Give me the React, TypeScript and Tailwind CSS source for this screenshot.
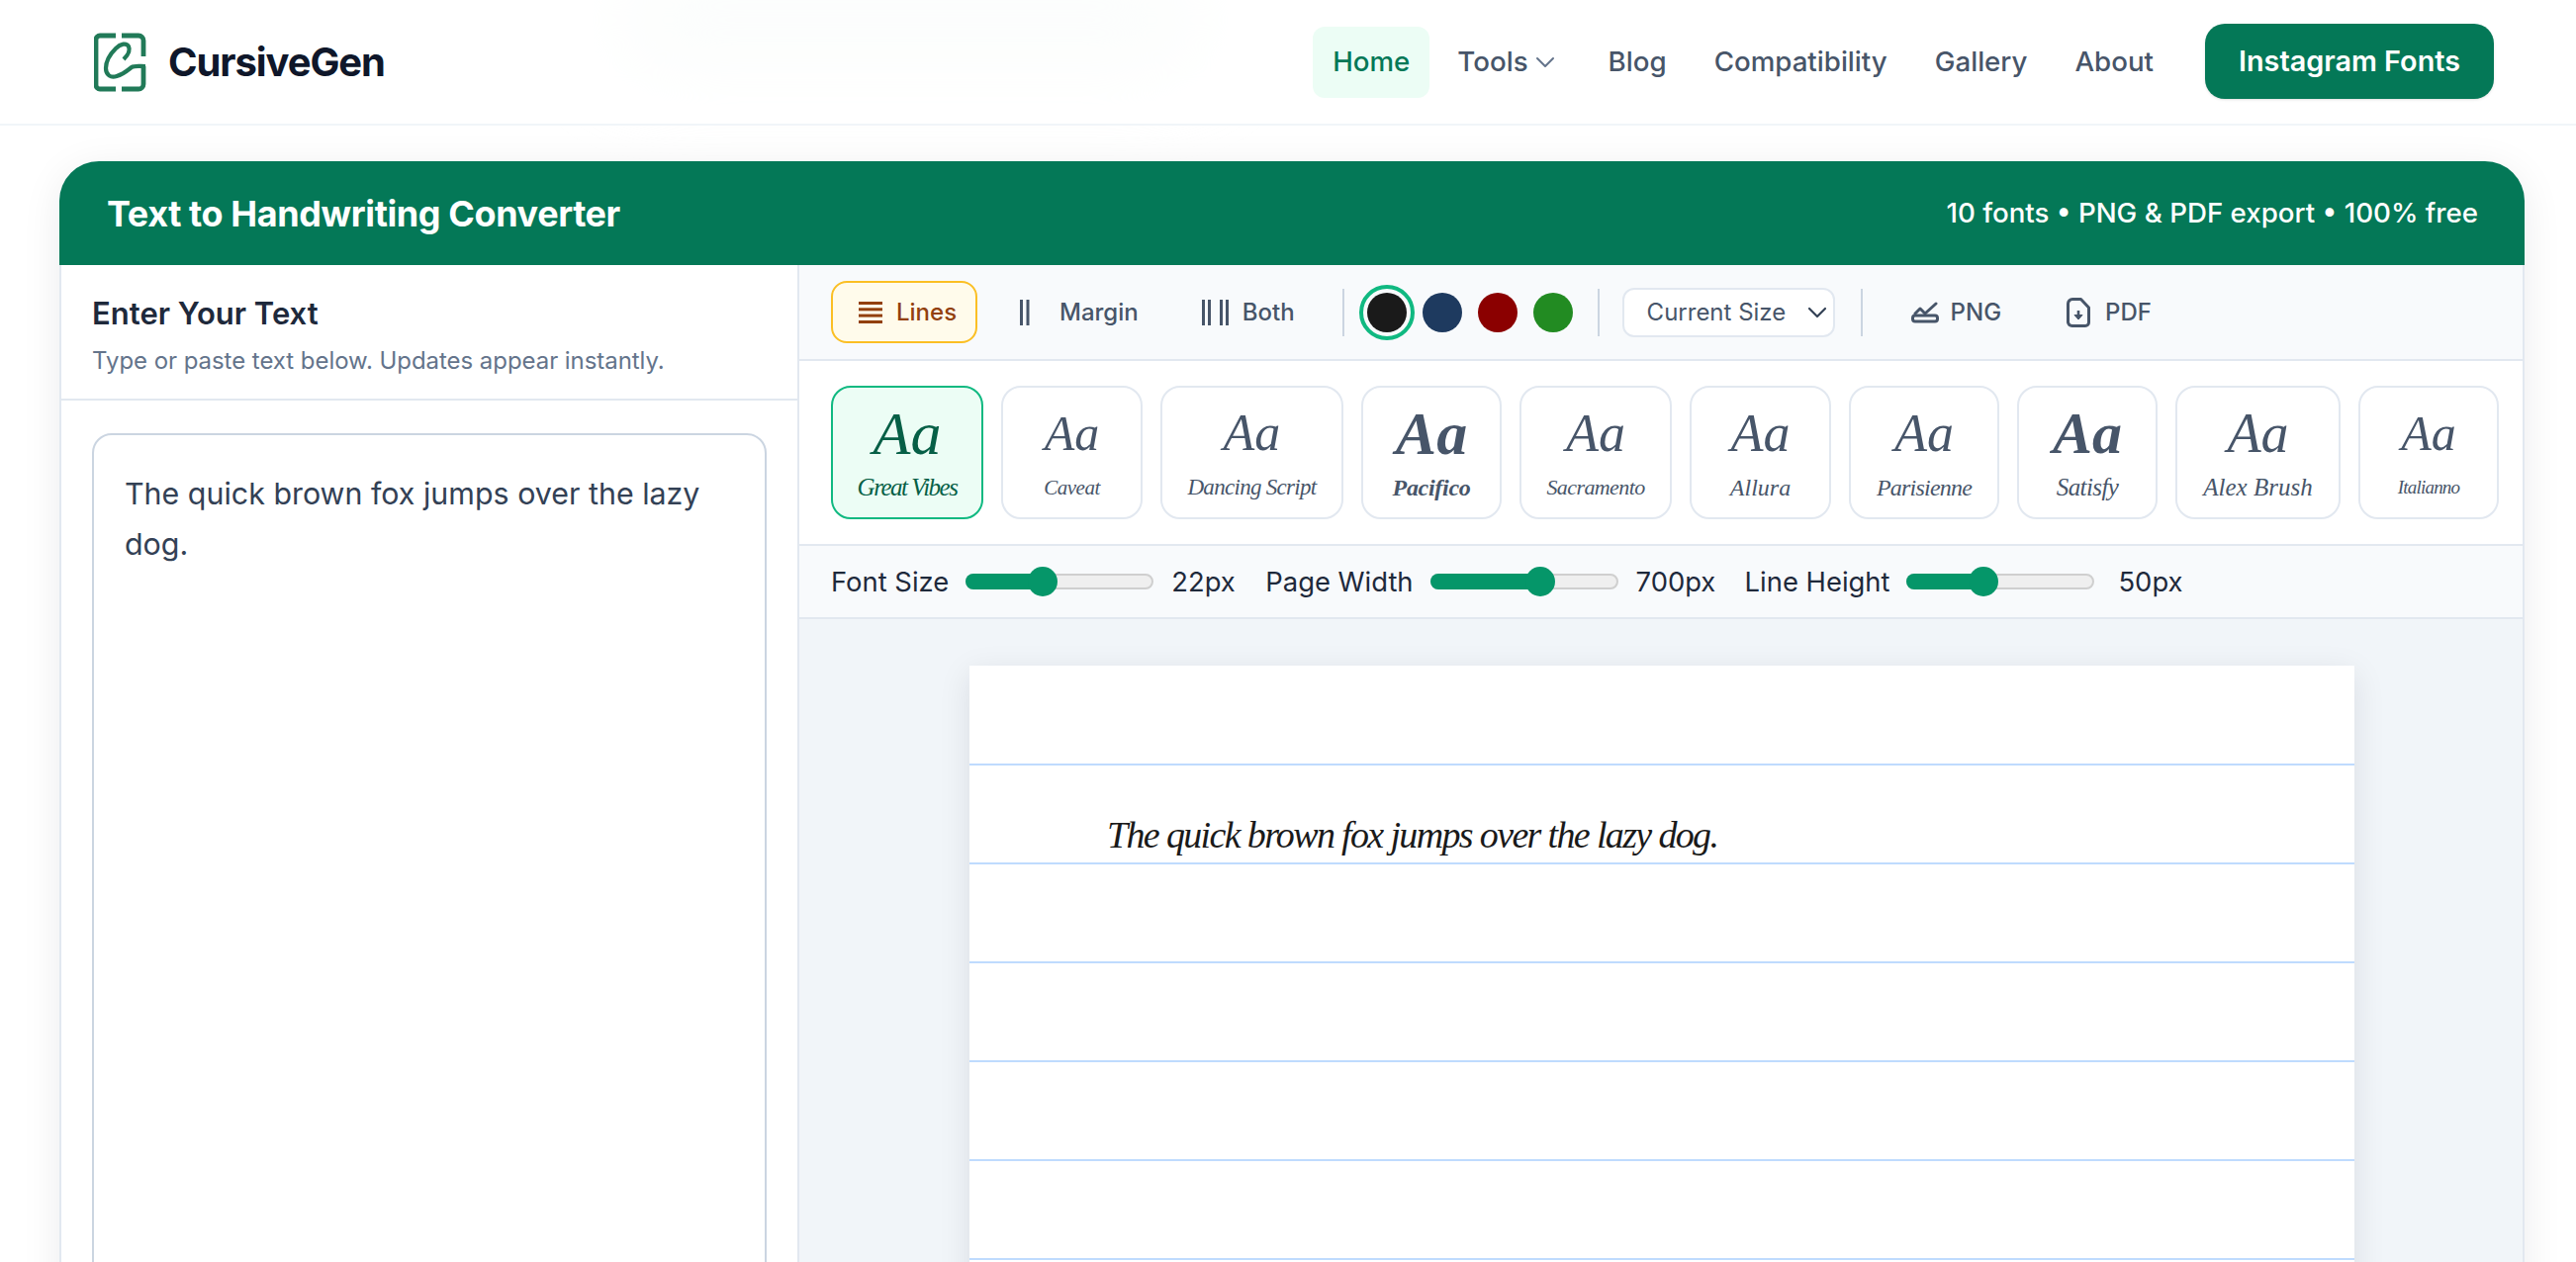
import React from 'react';
import { ChevronDown } from 'lucide-react';

const navItems = ['Blog', 'Compatibility', 'Gallery', 'About'];

const fontCards = [
  { name: 'Great Vibes', width: 'w-[154px]', active: true, aa: 'text-[62px] font-normal', label: 'text-[25px] font-normal tracking-[-1.5px]' },
  { name: 'Caveat', width: 'w-[143px]', aa: 'text-[50px] font-normal', label: 'text-[21px] font-normal tracking-[-0.5px]' },
  { name: 'Dancing Script', width: 'w-[185px]', aa: 'text-[52px] font-normal', label: 'text-[23px] font-normal tracking-[-0.7px]' },
  { name: 'Pacifico', width: 'w-[142px]', aa: 'text-[62px] font-bold', label: 'text-[24px] font-bold tracking-[-0.3px]' },
  { name: 'Sacramento', width: 'w-[154px]', aa: 'text-[54px] font-normal', label: 'text-[22px] font-normal tracking-[-0.6px]' },
  { name: 'Allura', width: 'w-[143px]', aa: 'text-[54px] font-normal', label: 'text-[24px] font-normal' },
  { name: 'Parisienne', width: 'w-[152px]', aa: 'text-[54px] font-normal', label: 'text-[24px] font-normal tracking-[-0.8px]' },
  { name: 'Satisfy', width: 'w-[142px]', aa: 'text-[60px] font-bold', label: 'text-[25px] font-normal tracking-[-0.6px]' },
  { name: 'Alex Brush', width: 'w-[167px]', aa: 'text-[56px] font-normal', label: 'text-[25px] font-normal' },
  { name: 'Italianno', width: 'w-[142px]', aa: 'text-[50px] font-normal', label: 'text-[19px] font-normal tracking-[-0.8px]' },
];

const swatches = ['bg-[#1a1a1a]', 'bg-[#1e3a5f]', 'bg-[#8b0000]', 'bg-[#228b22]'];

function Logo() {
  return (
    <svg width="53" height="60" viewBox="0 0 53 60" fill="none" stroke="#217a58" strokeWidth="4.8" strokeLinejoin="round" strokeLinecap="butt">
      <path d="M22 3H6a4 4 0 0 0-4 4v46a4 4 0 0 0 4 4h16" />
      <path d="M28 3h17a5 5 0 0 1 5 5v16" />
      <path d="M28 57h17a5 5 0 0 0 5-5V34" />
      <path d="M30 27c4-4 7-9 5-13-2-4-8-3-13 2-6 6-10 13-10 20 0 7 5 10 11 8 7-2 11-6 15-9 3-2 8-1 14-1" strokeWidth="4.2" />
    </svg>
  );
}

function LinesIcon() {
  return (
    <svg width="24" height="22" viewBox="0 0 24 22" fill="#92400e">
      <rect y="0" width="24" height="3" />
      <rect y="6.3" width="24" height="3" />
      <rect y="12.6" width="24" height="3" />
      <rect y="19" width="24" height="3" />
    </svg>
  );
}

function MarginIcon() {
  return (
    <svg width="26" height="26" viewBox="0 0 26 26" fill="#475569">
      <rect x="0" width="3" height="26" />
      <rect x="6.5" width="3" height="26" />
    </svg>
  );
}

function BothIcon() {
  return (
    <svg width="27" height="26" viewBox="0 0 27 26" fill="#475569">
      <rect x="0" width="3" height="26" />
      <rect x="6" width="3" height="26" />
      <rect x="18" width="3" height="26" />
      <rect x="24" width="3" height="26" />
    </svg>
  );
}

function PngIcon() {
  return (
    <svg width="28" height="22" viewBox="0 0 28 22" fill="none" stroke="#475569" strokeWidth="3" strokeLinecap="round" strokeLinejoin="round">
      <path d="M4 12l5-5 5 5 11-10" />
      <rect x="1.5" y="14" width="25" height="6" rx="2.5" />
    </svg>
  );
}

function PdfIcon() {
  return (
    <svg width="24" height="30" viewBox="0 0 24 30" fill="none" stroke="#475569" strokeWidth="3" strokeLinejoin="round" className="shrink-0">
      <path d="M6 1.5h8.5L22.5 10v15a3.5 3.5 0 0 1-3.5 3.5H6A4.5 4.5 0 0 1 1.5 25V6A4.5 4.5 0 0 1 6 1.5z" />
      <path d="M12 13v5" strokeWidth="2.6" />
      <path d="M8 17.5h8L12 22z" fill="#475569" strokeWidth="1" />
    </svg>
  );
}

function Slider({ label, fill, thumb }: { label: string; fill: string; thumb: string }) {
  return (
    <div className="flex items-center">
      <span>{label}</span>
      <div className="relative ml-[17px] h-[16px] w-[190px] rounded-full border-2 border-[#cfcfcf] bg-[#efefef]">
        <div className={'absolute -left-[2px] -top-[2px] h-[16px] rounded-l-full bg-[#059669] ' + fill} />
        <div className={'absolute -top-[9px] h-[30px] w-[30px] rounded-full bg-[#059669] ' + thumb} />
      </div>
    </div>
  );
}

export default function App() {
  return (
    <div className="relative h-[1276px] overflow-hidden bg-white font-['Inter',sans-serif] text-[#1e293b]">
      <div className="absolute left-[620px] -top-[30px] h-[100px] w-[600px] rounded-full bg-[#f3f8f5] blur-2xl" />

      <header className="relative flex h-[127px] items-center justify-between border-b-2 border-[#f1f5f9] bg-white/70 pl-[95px] pr-[83px]">
        <div className="flex items-center gap-[22px]">
          <Logo />
          <span className="text-[40px] font-bold tracking-[-1.1px] text-[#0f172a]">CursiveGen</span>
        </div>
        <nav className="flex items-center gap-[8px] text-[27.7px] font-medium text-[#475569]">
          <a className="flex h-[72px] items-center rounded-[12px] bg-[#ecfdf5] px-[20px] text-[#047857]">Home</a>
          <a className="flex h-[72px] items-center gap-[1px] px-[20px]">
            Tools
            <ChevronDown className="h-[32px] w-[32px] text-[#64748b]" strokeWidth={1.5} />
          </a>
          {navItems.map((item) => (
            <a key={item} className="flex h-[72px] items-center px-[20px]">{item}</a>
          ))}
          <button className="-mt-[2px] ml-[24px] h-[76px] w-[292px] rounded-[20px] bg-[#047857] text-[28.8px] font-semibold text-white shadow-sm">
            Instagram Fonts
          </button>
        </nav>
      </header>

      <main className="relative ml-[60px] mr-[52px] mt-[36px] rounded-t-[40px] border-x-2 border-[#e2e8f0] shadow-[0_8px_40px_rgba(15,23,42,0.08)]">
        <div className="-mx-[2px] flex h-[105px] items-center justify-between rounded-t-[40px] bg-[#047857] pl-[48px] pr-[47px] text-white">
          <h1 className="text-[36px] font-bold tracking-[-0.4px]">Text to Handwriting Converter</h1>
          <p className="text-[27.7px] font-medium">10 fonts • PNG &amp; PDF export • 100% free</p>
        </div>

        <div className="flex">
          <aside className="w-[746px] shrink-0 border-r-2 border-[#e2e8f0] bg-white">
            <div className="h-[137px] border-b-2 border-[#e2e8f0] pl-[31px] pt-[29px]">
              <h2 className="text-[31px] font-semibold leading-[40px] text-[#1e293b]">Enter Your Text</h2>
              <p className="mt-[12px] text-[24px] tracking-[-0.05px] leading-[32px] text-[#64748b]">Type or paste text below. Updates appear instantly.</p>
            </div>
            <div className="px-[31px] pt-[33px]">
              <div className="h-[900px] w-[682px] rounded-[20px] border-2 border-[#cbd5e1] px-[31px] py-[34px] text-[30.4px] leading-[51px] text-[#334155]">
                The quick brown fox jumps over the lazy dog.
              </div>
            </div>
          </aside>

          <section className="min-w-0 flex-1">
            <div className="flex h-[97px] items-center border-b-2 border-[#e2e8f0] bg-[#f8fafc] pl-[32px] text-[24px] font-medium text-[#475569]">
              <button className="flex h-[63px] w-[148px] items-center gap-[14px] rounded-[16px] border-2 border-[#fbbf24] bg-[#fffbeb] pl-[26px] text-[#92400e]">
                <LinesIcon />
                Lines
              </button>
              <button className="ml-[17px] flex h-[63px] items-center gap-[14px] px-[26px]">
                <MarginIcon />
                Margin
              </button>
              <button className="ml-[12px] flex h-[63px] items-center gap-[14px] px-[26px]">
                <BothIcon />
                Both
              </button>
              <div className="ml-[22px] h-[48px] w-[2px] bg-[#cbd5e1]" />
              <div className="ml-[23px] flex items-center gap-[16px]">
                {swatches.map((color, i) => (
                  <span
                    key={color}
                    className={
                      'block h-[40px] w-[40px] rounded-full ' + color + (i === 0 ? ' outline-[4px] outline-offset-[4px] outline-[#10b981]' : '')
                    }
                  />
                ))}
              </div>
              <div className="ml-[25px] h-[48px] w-[2px] bg-[#cbd5e1]" />
              <div className="ml-[23px] flex h-[50px] w-[215px] items-center justify-between rounded-[12px] border-2 border-[#e2e8f0] bg-white pl-[23px] font-normal">
                Current Size
                <ChevronDown className="h-[32px] w-[32px] text-[#334155]" strokeWidth={1.6} />
              </div>
              <div className="ml-[26px] h-[48px] w-[2px] bg-[#cbd5e1]" />
              <button className="ml-[23px] flex h-[63px] items-center gap-[12px] px-[26px]">
                <PngIcon />
                PNG
              </button>
              <button className="ml-[14px] flex h-[63px] items-center gap-[15px] px-[26px]">
                <PdfIcon />
                PDF
              </button>
            </div>

            <div className="flex h-[187px] items-center gap-[18px] border-b-2 border-[#e2e8f0] bg-white pl-[32px]">
              {fontCards.map((card) => (
                <div
                  key={card.name}
                  className={
                    "flex h-[135px] shrink-0 flex-col items-center rounded-[20px] border-2 pt-[12px] font-['Liberation_Serif',serif] italic " +
                    card.width +
                    (card.active ? ' border-[#10b981] bg-[#ecfdf5] text-[#065f46]' : ' border-[#e2e8f0] bg-white text-[#475569]')
                  }
                >
                  <span className={'h-[68px] leading-[68px] ' + card.aa}>Aa</span>
                  <span className={'mt-[6px] leading-[30px] whitespace-nowrap ' + card.label}>{card.name}</span>
                </div>
              ))}
            </div>

            <div className="flex h-[74px] items-center gap-[18px] border-b-2 border-[#e2e8f0] bg-[#f8fafc] pl-[32px] pt-[1px] text-[27.4px] text-[#1e293b]">
              <Slider label="Font Size" fill="w-[78px]" thumb="left-[61px]" />
              <span className="w-[77px]">22px</span>
              <Slider label="Page Width" fill="w-[110px]" thumb="left-[94px]" />
              <span className="w-[92px]">700px</span>
              <Slider label="Line Height" fill="w-[78px]" thumb="left-[61px]" />
              <span className="ml-[6px]">50px</span>
            </div>

            <div className="h-[700px] bg-[#f1f5f9] pl-[172px] pt-[47px]">
              <div className="w-[1400px] bg-white shadow-[0_8px_30px_rgba(15,23,42,0.1)]">
                <div className="h-[101px] border-b-2 border-[#bfdbfe]" />
                <div className="flex h-[100px] items-end border-b-2 border-[#bfdbfe] pl-[139px] font-['Liberation_Serif',serif] text-[38px] italic leading-[56px] tracking-[-1.65px] text-[#1a1a1a]">
                  The quick brown fox jumps over the lazy dog.
                </div>
                <div className="h-[100px] border-b-2 border-[#bfdbfe]" />
                <div className="h-[100px] border-b-2 border-[#bfdbfe]" />
                <div className="h-[100px] border-b-2 border-[#bfdbfe]" />
                <div className="h-[100px] border-b-2 border-[#bfdbfe]" />
                <div className="h-[100px]" />
              </div>
            </div>
          </section>
        </div>
      </main>
    </div>
  );
}
